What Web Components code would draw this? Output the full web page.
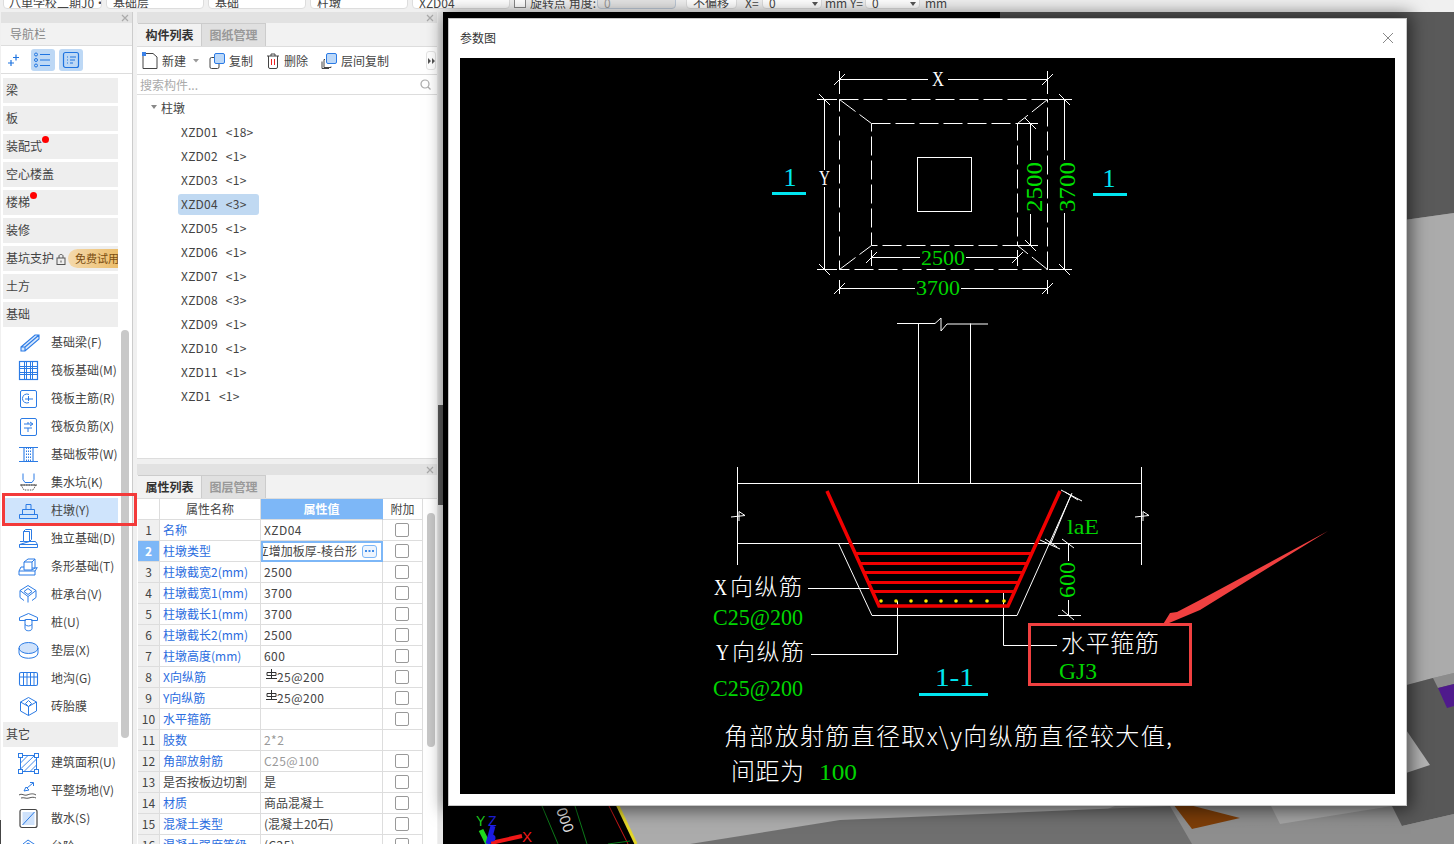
<!DOCTYPE html>
<html lang="zh"><head><meta charset="utf-8"><title>参数图</title>
<style>
html,body{margin:0;height:844px;overflow:hidden;background:#f0f0f0;font:12px "Noto Sans CJK SC","Liberation Sans",sans-serif;color:#333}
#root{position:relative;width:1454px;height:844px;overflow:hidden}
</style></head><body>
<div id="root">
<scene-bg></scene-bg>
<app-shell></app-shell>
<cad-dialog></cad-dialog>
</div>
<script>
const FF='"Noto Sans CJK SC","Liberation Sans",sans-serif';
function el(name,html){customElements.define(name,class extends HTMLElement{constructor(){super();this.attachShadow({mode:'open'}).innerHTML=typeof html==='function'?html(this):html}})}

el('scene-bg',`<style>:host{position:absolute;inset:0;display:block}svg{display:block}text{font-family:"Liberation Sans",sans-serif}</style>
<svg width="1454" height="844" viewBox="0 0 1454 844">
<rect width="1454" height="844" fill="#8e8e8e"/>
<polygon points="640,12 1454,12 1454,213 1390,222 1390,700 640,800" fill="#5a5a5a"/>
<polygon points="1390,222 1454,213 1454,673 1433,678 1390,690" fill="#ababab"/>
<polygon points="1380,692 1433,678 1454,684 1454,814 1402,826 1392,806" fill="#585858"/>
<polygon points="1433,678 1454,673 1454,684 1438,688" fill="#8c8c8c"/>
<polygon points="1438,688 1454,684 1454,706 1447,708" fill="#4f1a8c"/>
<polygon points="1400,721 1430,765 1400,775" fill="#b4b4b4"/>
<polygon points="1170,800 1240,818 1192,829" fill="#7c3d08"/>
<polygon points="1268,800 1280,824 1392,806 1392,800" fill="#a4a4a4"/>
<polygon points="615,800 1130,800 1100,812 700,844 635,844" fill="#ababab"/>
<polygon points="690,844 840,820 1170,806 1192,844" fill="#6f6f6f"/>
<polygon points="1192,844 1192,829 1280,824 1402,826 1454,814 1454,844" fill="#8e8e8e"/>
<polygon points="443,12 845,12 1000,12 1000,400 615,800 635,844 443,844" fill="#000"/>
<line x1="617" y1="804" x2="636" y2="844" stroke="#e3d62a" stroke-width="3"/>
<line x1="609" y1="806" x2="628" y2="844" stroke="#d01818" stroke-width="1"/>
<line x1="542" y1="806" x2="558" y2="844" stroke="#0d7a1a" stroke-width="1"/>
<line x1="575" y1="806" x2="587" y2="844" stroke="#0d7a1a" stroke-width="1"/>
<line x1="608" y1="844" x2="630" y2="841" stroke="#0d7a1a" stroke-width="1"/>
<g transform="translate(565,820) rotate(70)"><text x="0" y="5" text-anchor="middle" font-size="15" fill="#ddd">000</text></g>
<g transform="translate(488,838)">
<path d="M0 6 L-7 -8" stroke="#1fd81f" stroke-width="5"/>
<path d="M3 5 L34 -2" stroke="#f01818" stroke-width="4"/>
<path d="M0 6 L5 -12" stroke="#1c1ce0" stroke-width="5"/>
<circle cx="4" cy="0" r="3.5" fill="#1c1ce0"/>
</g>
<text x="476" y="826" font-size="14" fill="#1fd81f">Y</text><text x="488" y="826" font-size="14" fill="#2020e8">Z</text>
<text x="522" y="842" font-size="15" fill="#f01818">X</text>
</svg>`);

el('panel-head',`<style>:host{display:flex;justify-content:flex-end;align-items:center;height:11px;background:#e2e2e2;padding-right:2px;flex:none}svg{display:block}</style>
<svg width="10" height="10" viewBox="0 0 10 10"><path d="M2 2l6 6M8 2l-6 6" stroke="#aaa" stroke-width="1.2"/></svg>`);

el('top-strip',`<style>:host{display:flex;align-items:flex-end;height:12px;flex:none;background:#f0f0f0;overflow:hidden;font:12px ${FF};color:#444;padding-left:3px;box-sizing:border-box}
.w{display:flex;height:24px;margin-bottom:3px;flex:none;align-items:flex-end}
.f{height:24px;background:#fff;border:1px solid #ddd;border-radius:4px;box-sizing:border-box;padding:10px 0 0 6px;line-height:13px;display:block;overflow:hidden;margin-right:4px;white-space:nowrap;flex:none}
.l{line-height:13px;height:24px;padding-top:11px;box-sizing:border-box;white-space:nowrap;flex:none}
.g{background:#e4e4e4;border-color:#bcc8d6;color:#999}
.c{width:12px;height:12px;border:1px solid #888;background:#fff;box-sizing:border-box;flex:none;margin:0 4px 1px 0;align-self:flex-end}
.s{position:relative}.s::after{content:"";position:absolute;right:3px;bottom:2px;border:3px solid transparent;border-top:4px solid #555;border-bottom:0}
</style>
<div class="w">
<span class="f" style="width:99px;padding-left:5px">八单学校二期J0·</span>
<span class="f" style="width:98px">基础层</span>
<span class="f" style="width:98px">基础</span>
<span class="f" style="width:98px">柱墩</span>
<span class="f" style="width:98px">XZD04</span>
<span class="c"></span><span class="l" style="width:67px">旋转点 角度:</span>
<span class="f g" style="width:79px;margin-right:10px">0</span>
<span class="f" style="width:51px;margin-right:8px">不偏移</span>
<span class="l" style="width:17px">X=</span>
<span class="f s" style="width:60px;margin-right:3px">0</span>
<span class="l" style="width:40px">mm Y=</span>
<span class="f s" style="width:55px;margin-right:5px">0</span>
<span class="l">mm</span>
</div>`);

const IC={
lines:`<svg width="24" height="22" viewBox="0 0 24 22"><g fill="none" stroke="#1f74e0"><circle cx="5" cy="5.5" r="1.5"/><circle cx="5" cy="11" r="1.5"/><circle cx="5" cy="16.5" r="1.5"/><path d="M9 5.5h10M9 11h10M9 16.5h10" stroke-width="1.2"/></g></svg>`,
form:`<svg width="24" height="22" viewBox="0 0 24 22"><g fill="none" stroke="#1f74e0"><rect x="4.5" y="3.5" width="15" height="15" rx="2" stroke-width="1.2"/><path d="M8 8h1M11 8h6M8 11h1M11 11h5M8 14h1M11 14h3"/></g></svg>`,
spark:`<svg width="14" height="14" viewBox="0 0 14 14"><path d="M9 1.5v6M6 4.5h6M4 7v6M1 10h6" stroke="#1f74e0" stroke-width="1.2"/></svg>`,
beam:`<path d="M5 15L19 3h4v4L9 19H5zM5 15h4v4M9 15L23 3" fill="#d8e8fc" stroke-width="1.1"/>`,
raft:`<rect x="3.5" y="1.5" width="18" height="18" stroke-width="1.2"/><path d="M8.5 1.5v18M10.5 1.5v18M14.5 1.5v18M16.5 1.5v18M3.5 6.5h18M3.5 8.5h18M3.5 12.5h18M3.5 14.5h18"/>`,
main:`<rect x="4.5" y="2.5" width="16" height="17" rx="1.5"/><path d="M13 6.5a4.5 4.5 0 1 0 0 8M12.5 8v5M9 11h8"/>`,
neg:`<rect x="4.5" y="2.5" width="16" height="17" rx="1.5"/><path d="M8 8h8M8 12h8M12 12v4M14 6l3 2-3 2M12 6v2"/>`,
band:`<path d="M3 3.5h19M3 17.5h19M8 3.5v14M17 3.5v14" stroke-width="1.1"/><path d="M10.5 3.5v14M12.5 3.5v14M14.5 3.5v14" stroke-dasharray="1.5 1.5"/>`,
pit:`<path d="M7 1.5v6l2 3h7l2-3v-6"/><path d="M5 13h15l-3 5H8z" stroke-dasharray="1.5 1" stroke="#555"/><path d="M4 13h17" stroke="#555"/>`,
pier:`<path d="M10 4.5h5v5h-5zM6.5 9.5h12v5h-12zM3.5 14.5h18v4h-18z"/>`,
iso:`<path d="M7.5 3.5h6v10h-6zM7.5 3.5l2-2h6v10l-2 2M4 13.5h3.5M13.5 13.5h6l2 3v3h-18v-3zM3.5 16.5h18"/>`,
strip:`<path d="M8 6l4-3h7v9l-3 2M8 6h8v8H8zM16 6l3-3M8 11H5l-2 4v4h16v-4l2-3v-1M3 15h16M16 12h5"/>`,
cap:`<path d="M12 1.5l8 5-8 6-8-6zM4 6.5v7l4 3M20 6.5v7l-4 3M12 12.5v6M12 4.5l4 3-4 3-4-3z"/>`,
pile:`<path d="M3.5 5.5l9-4 9 4v3h-6v-1h-6v1h-6zM9 7.5v9c0 3 7 3 7 0v-9M9 12.5c2 2 5 2 7 0"/>`,
pad:`<ellipse cx="12.5" cy="8" rx="9.5" ry="5.5" fill="#cfe2fb"/><path d="M3 8v5c0 7 19 7 19 0V8"/>`,
ditch:`<rect x="3.5" y="4.5" width="18" height="13" rx="1.5" stroke-width="1.1"/><path d="M3.5 9h18M7.5 4.5v13M11 4.5v13M14.5 4.5v13M18 4.5v13"/>`,
film:`<path d="M12.5 1.5l8 4.5v9l-8 4.5-8-4.5V6zM4.5 6l8 4.5 8-4.5M12.5 10.5v9M12.5 4.5l3 3-3 3-3-3z"/>`,
area:`<rect x="4.5" y="3.5" width="16" height="16"/><path d="M4.5 11l8-8M4.5 17L19 3M8 19.5L20.5 7M14 19.5l6.5-6.5" stroke-width=".9"/><rect x="2.5" y="1.5" width="4" height="4" fill="#fff"/><rect x="18.5" y="1.5" width="4" height="4" fill="#fff"/><rect x="2.5" y="17.5" width="4" height="4" fill="#fff"/><rect x="18.5" y="17.5" width="4" height="4" fill="#fff"/>`,
level:`<path d="M8 11l2-4 3 3zM11 8l6-5M14 2.5h3.5V6"/><path d="M3 15c3-2 5 1 8 0s6-2 9 0M5 18c3-1 5 1 8 0s5-1 7 0" stroke="#555"/>`,
apron:`<rect x="4" y="1.5" width="17" height="18" rx="2" stroke="#444" stroke-width="1.2"/><rect x="6.5" y="4" width="12" height="13" fill="#cfe2fb" stroke="none"/><path d="M6.5 17L18.5 4"/>`,
step:`<path d="M3 14l9-7 10 6v6H3zM7 8l5-4 9 6"/>`
};
function ico(k){return `<svg width="24" height="22" viewBox="0 0 24 22" fill="none" stroke="#2b7be5" stroke-width="1">${IC[k]}</svg>`}

el('nav-cat',h=>`<style>:host{display:flex;align-items:center;height:25px;margin:0 14px 3px 2px;background:#eeeeee;font:12px ${FF};color:#444;position:relative;padding-bottom:2px;box-sizing:border-box;white-space:nowrap;overflow:hidden;flex:none}
span{margin-left:3px}i{position:absolute;width:7px;height:7px;border-radius:50%;background:#f00;top:2px;left:${h.getAttribute('dot')||0}px;display:${h.hasAttribute('dot')?'block':'none'}}
b{font-weight:normal;display:${h.hasAttribute('trial')?'inline-flex':'none'};align-items:center;height:19px;margin:2px 0 0 2px;padding:0 0 2px 7px;width:51px;box-sizing:border-box;border-radius:10px 0 0 10px;background:linear-gradient(90deg,#f4d9ac,#ecbd6a);color:#7a4d10;font-size:11px;white-space:nowrap;flex:none;overflow:hidden}
svg{margin:2px 0 0 2px;flex:none;display:${h.hasAttribute('trial')?'block':'none'}}</style>
<span><slot></slot></span><i></i><svg width="10" height="12" viewBox="0 0 10 12" fill="none" stroke="#555"><rect x="1" y="5" width="8" height="6.5"/><path d="M3 5V3c0-2 4-2 4 0v2"/><path d="M5 7.5v2"/></svg><b>免费试用</b>`);

el('nav-item',h=>`<style>:host{display:flex;align-items:center;height:25px;margin:0 14px 3px 2px;font:12px ${FF};color:#444;white-space:nowrap;flex:none;background:${h.hasAttribute('sel')?'#cfe4fc':'transparent'}}
svg{margin-left:13px;flex:none;display:block}span{margin-left:11px;padding-bottom:2px}</style>${ico(h.getAttribute('i'))}<span><slot></slot></span>`);

el('nav-panel',`<style>:host{display:flex;flex-direction:column;width:132px;margin-left:1px;background:#fff;border-right:1px solid #ccc;box-sizing:border-box;flex:none;height:832px;overflow:hidden;position:relative;font:12px ${FF}}
.t{height:22px;background:#f2f2f2;border-bottom:1px solid #ddd;color:#888;line-height:22px;padding-left:9px;flex:none}
.b{height:27px;border-bottom:1px solid #ddd;display:flex;align-items:center;padding-left:6px;gap:4px;flex:none;margin-bottom:4px}
.b span{display:flex;width:24px;height:22px;border-radius:3px;background:#bdd8f5}.b svg{display:block}
.b .p{background:none;width:20px;align-items:center}
.sc{position:absolute;left:120px;top:318px;width:8px;height:408px;background:#c8c8c8;border-radius:4px}
.list{display:flex;flex-direction:column}
</style>
<panel-head></panel-head><div class="t">导航栏</div>
<div class="b"><span class="p">${IC.spark}</span><span>${IC.lines}</span><span>${IC.form}</span></div>
<div class="list">
<nav-cat>梁</nav-cat><nav-cat>板</nav-cat><nav-cat dot="39">装配式</nav-cat><nav-cat>空心楼盖</nav-cat><nav-cat dot="27">楼梯</nav-cat><nav-cat>装修</nav-cat><nav-cat trial>基坑支护</nav-cat><nav-cat>土方</nav-cat><nav-cat>基础</nav-cat>
<nav-item i="beam">基础梁(F)</nav-item><nav-item i="raft">筏板基础(M)</nav-item><nav-item i="main">筏板主筋(R)</nav-item><nav-item i="neg">筏板负筋(X)</nav-item><nav-item i="band">基础板带(W)</nav-item><nav-item i="pit">集水坑(K)</nav-item><nav-item i="pier" sel>柱墩(Y)</nav-item><nav-item i="iso">独立基础(D)</nav-item><nav-item i="strip">条形基础(T)</nav-item><nav-item i="cap">桩承台(V)</nav-item><nav-item i="pile">桩(U)</nav-item><nav-item i="pad">垫层(X)</nav-item><nav-item i="ditch">地沟(G)</nav-item><nav-item i="film">砖胎膜</nav-item>
<nav-cat>其它</nav-cat>
<nav-item i="area">建筑面积(U)</nav-item><nav-item i="level">平整场地(V)</nav-item><nav-item i="apron">散水(S)</nav-item><nav-item i="step">台阶</nav-item>
</div><div class="sc"></div>`);

el('tab-row',h=>`<style>:host{display:flex;height:23px;background:#f2f2f2;border-bottom:1px solid #ddd;flex:none;font:12px ${FF};padding-left:1px}
span{width:64px;text-align:center;line-height:21px;box-sizing:border-box}
.a{font-weight:bold;color:#333;background:#f2f2f2;border-top:1px solid #ccc;border-right:1px solid #ccc}
.i{color:#999;background:#e0e0e0;font-weight:bold;border:1px solid #ccc;border-left:0;border-bottom:0}</style>
<span class="a">${h.getAttribute('a')}</span><span class="i">${h.getAttribute('b')}</span>`);

el('tree-row',h=>`<style>:host{display:flex;height:24px;align-items:center;padding-left:44px;font:12px ${FF};color:#444;white-space:pre;flex:none}
span{padding:0 3px;height:21px;line-height:20px;border-radius:3px;margin-left:-3px;letter-spacing:.25px;word-spacing:1px;${h.hasAttribute('sel')?'background:#c0d9f2;width:81px;box-sizing:border-box':''}}</style><span><slot></slot></span>`);

el('comp-list',`<style>:host{display:flex;flex-direction:column;height:447px;background:#fff;border-bottom:1px solid #ddd;box-sizing:border-box;font:12px ${FF};color:#444;flex:none;overflow:hidden}
.tb{height:27px;border-bottom:1px solid #ddd;display:flex;align-items:center;padding-left:5px;flex:none;position:relative}
.tb svg{display:block;flex:none}.tb span{margin-left:4px;white-space:nowrap}
.m{position:absolute;left:289px;top:4px;width:10px;height:19px;border:1px solid #e4e4e4;border-radius:3px;background:#fff;display:flex;align-items:center;justify-content:center;box-sizing:border-box}
.s{height:19px;border-bottom:1px solid #ddd;display:flex;align-items:center;justify-content:space-between;padding:0 6px 0 3px;color:#aaa;flex:none}
.rt{display:flex;align-items:center;height:26px;padding:0 0 2px 14px;box-sizing:border-box;flex:none}.rt i{border:3px solid transparent;border-top:4px solid #888;border-bottom:0;margin-right:4px}
</style>
<panel-head></panel-head><tab-row a="构件列表" b="图纸管理"></tab-row>
<div class="tb">
<svg width="16" height="18" viewBox="0 0 16 18" fill="none"><path d="M1 4v12.5h14V5l-4-3.5H3" stroke="#444"/><rect x="0" y="0" width="4" height="4" fill="#3b82e8"/></svg><span>新建</span>
<svg width="6" height="4" viewBox="0 0 6 4" style="margin:0 10px 0 7px"><path d="M0 0h6L3 3.5z" fill="#999"/></svg>
<svg width="16" height="16" viewBox="0 0 16 16" fill="none"><rect x="1" y="4.5" width="9" height="11" rx="1.5" stroke="#444"/><rect x="5.5" y=".5" width="10" height="10" rx="1.5" fill="#bcd8f8" stroke="#2b7be5"/></svg><span>复制</span>
<svg width="14" height="16" viewBox="0 0 14 16" fill="none" style="margin-left:13px"><path d="M1 3h12M5 3V1h4v2M2.5 3v11a1.5 1.5 0 0 0 1.5 1.5h6a1.5 1.5 0 0 0 1.5-1.5V3" stroke="#444"/><path d="M5.5 6v6M8.5 6v6" stroke="#e22"/></svg><span>删除</span>
<svg width="16" height="16" viewBox="0 0 16 16" fill="none" style="margin-left:13px"><path d="M4 6.5H3v8h7v-1M1 8.5v7h7" stroke="#444"/><rect x="5.5" y=".5" width="10" height="10" rx="1.5" fill="#bcd8f8" stroke="#2b7be5"/></svg><span>层间复制</span>
<div class="m"><svg width="7" height="6" viewBox="0 0 7 6"><path d="M0 0l3 3-3 3zM4 0l3 3-3 3z" fill="#555"/></svg></div>
</div>
<div class="s"><span>搜索构件...</span><svg width="11" height="11" viewBox="0 0 11 11" fill="none" stroke="#aaa" stroke-width="1.2"><circle cx="5" cy="5" r="4"/><path d="M8 8l2.5 2.5"/></svg></div>
<div class="rt"><i></i>柱墩</div>
<div style="margin-top:-1px">
<tree-row>XZD01  &lt;18&gt;</tree-row><tree-row>XZD02  &lt;1&gt;</tree-row><tree-row>XZD03  &lt;1&gt;</tree-row><tree-row sel>XZD04  &lt;3&gt;</tree-row><tree-row>XZD05  &lt;1&gt;</tree-row><tree-row>XZD06  &lt;1&gt;</tree-row><tree-row>XZD07  &lt;1&gt;</tree-row><tree-row>XZD08  &lt;3&gt;</tree-row><tree-row>XZD09  &lt;1&gt;</tree-row><tree-row>XZD10  &lt;1&gt;</tree-row><tree-row>XZD11  &lt;1&gt;</tree-row><tree-row>XZD1  &lt;1&gt;</tree-row>
</div>`);

const REB=`<svg width="11" height="11" viewBox="0 0 11 11" fill="none" stroke="#333" style="margin:-4px 0 0 5px;flex:none"><path d="M5.5 0v10M1 3.5h9v3H1zM0 9.5h11"/></svg>`;
const ROWS=[['名称','XZD04',1,1],['柱墩类型','',1,1,'e'],['柱墩截宽2(mm)','2500',1,1],['柱墩截宽1(mm)','3700',1,1],['柱墩截长1(mm)','3700',1,1],['柱墩截长2(mm)','2500',1,1],['柱墩高度(mm)','600',1,1],['X向纵筋','25@200',1,1,'r'],['Y向纵筋','25@200',1,1,'r'],['水平箍筋','',1,1],['肢数','2*2',1,0,'g'],['角部放射筋','C25@100',1,1,'g'],['是否按板边切割','是',0,1],['材质','商品混凝土',1,1],['混凝土类型','(混凝土20石)',1,1],['混凝土强度等级','(C25)',1,1]];
el('prop-table',()=>`<style>:host{display:flex;flex-direction:column;flex:1;min-height:0;background:#fff;font:12px ${FF};color:#444;overflow:hidden;position:relative}
.g{display:grid;grid-template-columns:22px 101px 122px 40px;grid-auto-rows:21px;width:285px;margin-left:1px}
.g>div{border-right:1px solid #ddd;border-bottom:1px solid #ddd;box-sizing:border-box;display:flex;align-items:center;white-space:nowrap;overflow:hidden;padding:0 0 2px 3px}
.h{justify-content:center;padding-left:0!important}.n{background:#f0f0f0;justify-content:center;padding-left:0!important;font-size:12px}
.v{background:#7db7f7;color:#fff;justify-content:center;font-weight:bold;padding-left:0!important;border-right-color:#7db7f7!important}
.nm{color:#2b6de0}.nd{color:#444}.gy{color:#999}.ls{letter-spacing:.45px}
.c{justify-content:center;padding:0 1px 0 0!important}.c i{display:block;width:14px;height:14px;border:1px solid #999;border-radius:2px;box-sizing:border-box;background:#fff}
.ed{border:2px solid #7db7f7!important;padding:0 4px 0 0!important;gap:5px;justify-content:flex-end}
.ed span{overflow:hidden;flex:1;display:flex;justify-content:flex-end;white-space:nowrap;padding-bottom:2px}
.d{flex:none;width:15px;height:13px;border:1px solid #7db7f7;border-radius:3px;box-sizing:border-box;display:flex;align-items:center;justify-content:center;background:#eef5fe}
.sc{position:absolute;left:290px;top:49px;width:8px;height:234px;background:#c8c8c8;border-radius:4px}
</style>
<panel-head></panel-head><tab-row a="属性列表" b="图层管理"></tab-row>
<div class="g"><div class="h"></div><div class="h">属性名称</div><div class="v">属性值</div><div class="h">附加</div>
${ROWS.map((r,i)=>{const cur=i===1;const t=r[4];
let val;const asc=/^[\x00-\x7f]+$/.test(r[1])?' ls':'';
if(t==='e')val=`<div class="ed"><span>独立增加板厚-棱台形</span><div class="d"><svg width="9" height="3" viewBox="0 0 9 3"><path d="M0 0h2v2H0zM3.5 0h2v2h-2zM7 0h2v2H7z" fill="#3f8be8"/></svg></div></div>`;
else if(t==='r')val=`<div class="ls" style="padding-left:0">${REB}${r[1]}</div>`;
else val=`<div class="${(t==='g'?'gy':'')+asc}">${r[1]}</div>`;
return `<div class="n" style="${cur?'background:#7db7f7;color:#fff;font-weight:bold':''}">${i+1}</div><div class="${r[2]?'nm':'nd'}">${r[0]}</div>${val}<div class="c">${r[3]?'<i></i>':''}</div>`}).join('')}
</div><div class="sc"></div>`);

el('app-shell',`<style>:host{position:relative;display:flex;flex-direction:column;width:443px;height:844px;background:#f0f0f0;overflow:visible}
.m{display:flex;flex:1;min-height:0}
.c{display:flex;flex-direction:column;width:300px;margin-left:4px;gap:5px;flex:none;height:832px}
.sp{width:5px;margin-left:1px;background:#e9e9e9;position:relative;flex:none}.sp::after{content:"";position:absolute;left:0;right:0;top:393px;height:100px;background:#5a5a5a}
.top{width:1454px}
.red{position:absolute;left:2px;top:493px;width:135px;height:33px;border:3px solid #f33a3a;box-sizing:border-box;pointer-events:none}
.cn{position:absolute;left:0;top:820px;width:1px;bottom:0;background:#444}
</style><top-strip class="top"></top-strip>
<div class="m"><nav-panel></nav-panel><div class="c"><comp-list></comp-list><prop-table></prop-table></div><div class="sp"></div></div>
<div class="red"></div><div class="cn"></div>`);

const G1='#00e000',G2='#00d400',CY='#00e6f0';
el('cad-dialog',`<style>:host{position:absolute;left:448px;top:18px;width:959px;height:788px;background:#fff;border:1px solid #c8c8c8;box-sizing:border-box;box-shadow:0 0 16px 4px rgba(0,0,0,.55);display:flex;flex-direction:column;font:12px ${FF};color:#333}
.h{height:39px;box-sizing:border-box;display:flex;align-items:center;justify-content:space-between;padding:0 12px 2px 11px;font-size:12px;flex:none}
svg.x{display:block}.b{margin:0 11px 0 11px;height:736px;background:#000;flex:none}
.cad{display:block}
.cad text{font-family:"Liberation Serif",serif}.cad .z{font-family:"Noto Sans CJK SC",sans-serif;font-weight:300}
</style>
<div class="h"><span>参数图</span><svg class="x" width="12" height="12" viewBox="0 0 12 12"><path d="M1 1l10 10M11 1L1 11" stroke="#888"/></svg></div>
<div class="b"><svg class="cad" width="935" height="736" viewBox="460 58 935 736">
<g fill="none" stroke="#fff" stroke-width="1">
<path d="M839.5 71V94M1047.5 71V94M839.5 79.5H928M948 79.5H1047.5"/>
<path d="M834 85L845 74M1042 85L1053 74"/>
<path d="M817 99.5H837M1049 99.5H1072M817 269.5H837M1049 269.5H1072"/>
<path d="M824.5 99.5V170M824.5 187V269.5M1064.5 99.5V160M1064.5 213V269.5"/>
<path d="M819 94L830 105M819 264L830 275M1059 94L1070 105M1059 264L1070 275"/>
<rect x="839.5" y="99.5" width="208" height="170" stroke-dasharray="19 5"/>
<rect x="871.5" y="123.5" width="146" height="122" stroke-dasharray="19 5"/>
<rect x="917.5" y="157.5" width="54" height="54"/>
<path d="M839.5 99.5L871.5 123.5M1047.5 99.5L1017.5 123.5M839.5 269.5L871.5 245.5M1047.5 269.5L1017.5 245.5" stroke-dasharray="20 5"/>
<path d="M1030.5 123.5V160M1030.5 214V245.5M1017 123.5H1038M1017 245.5H1038"/>
<path d="M1025 118L1036 129M1025 240L1036 251"/>
<path d="M871.5 257.5H920M966 257.5H1017.5M871.5 250V266M1017.5 250V266M866 263L877 252M1012 263L1023 252"/>
<path d="M839.5 288.5H915M961 288.5H1047.5M839.5 280V294M1047.5 280V294M834 294L845 283M1042 294L1053 283"/>
<path d="M897 323.5H935L941 318V331L947 324H988"/>
<path d="M918.5 323.5V483M970.5 323.5V483"/>
<path d="M737 483.5H1141.5M737 543.5H1141.5M737.5 467V565M1141.5 467V565"/>
<path d="M731 517L745 515.5L739 511.5V521M1135 517L1149 515.5L1143 511.5V521"/>
<path d="M838.5 543.5L872 615.5H1017L1072 493"/>
<path d="M808 588.5H870M897.5 601V654.5H811M1003.5 593V645.5H1057"/>
<path d="M1061 490L1082 501M1040 540L1060 549M1071 495L1051 543M1065 492L1078 500M1045 539L1057 547"/>
<path d="M1068.5 543.5V561M1068.5 600V615.5M1058 615.5H1081M1062 610L1074 620M1062 539L1074 548"/>
</g>
<g fill="none" stroke="#f00000">
<path d="M827 491L879 606H1008L1060 491" stroke-width="3.5"/>
<path d="M856 553.5H1031M860 563.5H1027M864 572.5H1023M869 582.5H1018M873 591.5H1014" stroke-width="3"/>
</g>
<g fill="#ffe800"><circle cx="881" cy="601" r="1.8"/><circle cx="896" cy="601" r="1.8"/><circle cx="911" cy="601" r="1.8"/><circle cx="926" cy="601" r="1.8"/><circle cx="941" cy="601" r="1.8"/><circle cx="956" cy="601" r="1.8"/><circle cx="971" cy="601" r="1.8"/><circle cx="987" cy="601" r="1.8"/><circle cx="1004" cy="601" r="1.8"/></g>
<rect x="772" y="192" width="34" height="3" fill="${CY}"/><rect x="1093" y="193" width="34" height="3" fill="${CY}"/><rect x="919" y="693" width="69" height="3" fill="${CY}"/>
<text x="790" y="186" font-size="26" text-anchor="middle" fill="${CY}">1</text>
<text x="1109" y="187" font-size="26" text-anchor="middle" fill="${CY}">1</text>
<text x="935" y="686" font-size="26" fill="${CY}" textLength="39" lengthAdjust="spacingAndGlyphs">1-1</text>
<text x="932" y="86" font-size="20" fill="#fff" textLength="12" lengthAdjust="spacingAndGlyphs">X</text>
<text x="819" y="185" font-size="20" fill="#fff" textLength="11" lengthAdjust="spacingAndGlyphs">Y</text>
<text x="921" y="265" font-size="22" fill="${G2}" textLength="44" lengthAdjust="spacingAndGlyphs">2500</text>
<text x="916" y="295" font-size="22" fill="${G2}" textLength="44" lengthAdjust="spacingAndGlyphs">3700</text>
<text transform="translate(1042,212) rotate(-90)" font-size="24" fill="${G1}" textLength="50" lengthAdjust="spacingAndGlyphs">2500</text>
<text transform="translate(1075,212) rotate(-90)" font-size="24" fill="${G1}" textLength="50" lengthAdjust="spacingAndGlyphs">3700</text>
<text transform="translate(1075,598) rotate(-90)" font-size="24" fill="${G1}" textLength="36" lengthAdjust="spacingAndGlyphs">600</text>
<text x="1067" y="534" font-size="21" fill="${G2}" textLength="32" lengthAdjust="spacingAndGlyphs">laE</text>
<text x="714" y="595" font-size="24" fill="#fff" textLength="13" lengthAdjust="spacingAndGlyphs">X</text>
<text class="z" x="730" y="595" font-size="23" fill="#fff" textLength="72">向纵筋</text>
<text x="716" y="660" font-size="24" fill="#fff" textLength="13" lengthAdjust="spacingAndGlyphs">Y</text>
<text class="z" x="732" y="660" font-size="23" fill="#fff" textLength="72">向纵筋</text>
<text x="713" y="625" font-size="24" fill="${G2}" textLength="90" lengthAdjust="spacingAndGlyphs">C25@200</text>
<text x="713" y="696" font-size="24" fill="${G2}" textLength="90" lengthAdjust="spacingAndGlyphs">C25@200</text>
<text class="z" x="1061" y="652" font-size="24" fill="#fff" textLength="98">水平箍筋</text>
<text x="1059" y="679" font-size="24" fill="${G2}" textLength="38" lengthAdjust="spacingAndGlyphs">GJ3</text>
<text class="z" x="724" y="745" font-size="24" fill="#fff" textLength="448">角部放射筋直径取x\\y向纵筋直径较大值,</text>
<text class="z" x="731" y="780" font-size="24" fill="#fff" textLength="73">间距为</text>
<text x="819" y="780" font-size="24" fill="${G2}" textLength="38" lengthAdjust="spacingAndGlyphs">100</text>
<rect x="1029.5" y="624.5" width="161" height="60" fill="none" stroke="#f04040" stroke-width="3"/>
<polygon points="1328,531 1200,600 1177,612 1170,613 1162,626 1200,610" fill="#f04040"/>
</svg></div>`);
</script>
</body></html>
